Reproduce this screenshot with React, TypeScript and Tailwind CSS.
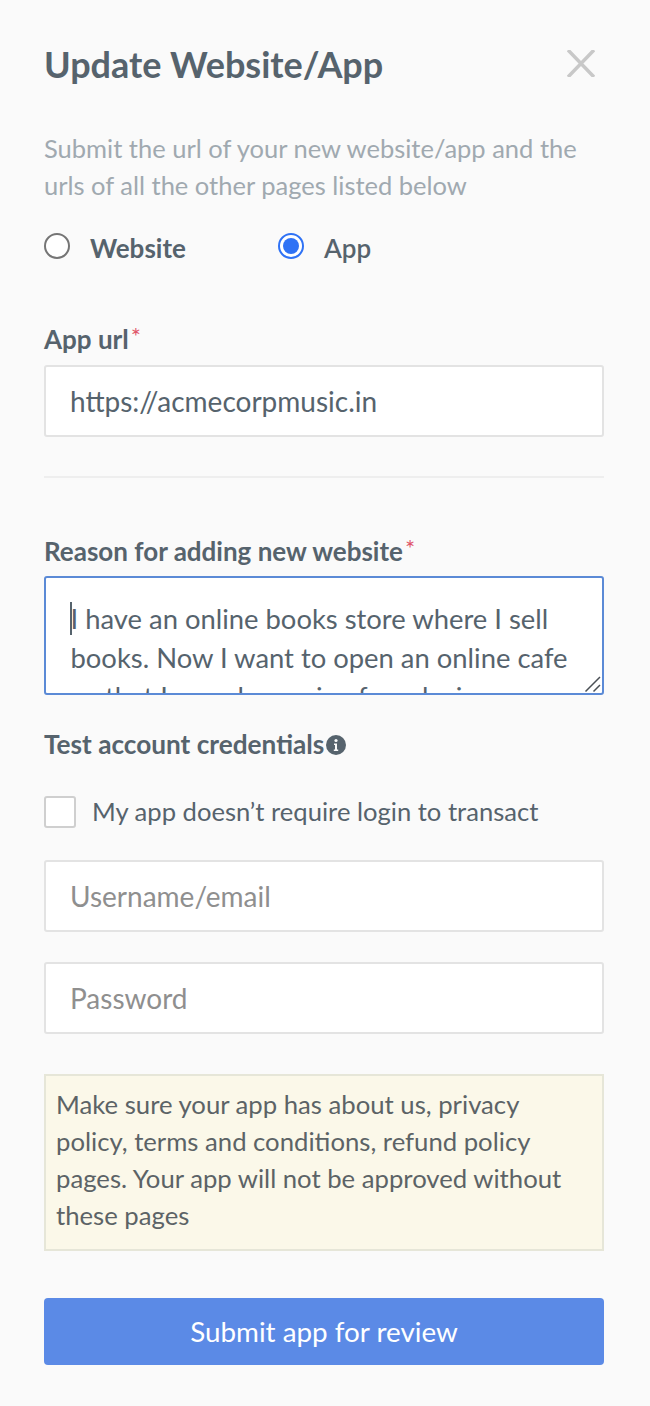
const REASON =
  "I have an online books store where I sell books. Now I want to open an online cafe so that I can also revive from losing my business";

export default function App() {
  return (
    <div className="min-h-[1406px] bg-[#fafafa] pr-[46px] pl-[44px] pt-[40px] font-['Lato',sans-serif] text-[#56636d]">
      <div className="flex items-start justify-between">
        <h1 className="text-[36px] leading-[48px] font-bold">Update Website/App</h1>
        <button className="mt-[10px] mr-[9px] text-[#c8c8c8]">
          <svg width="28" height="27" viewBox="0 0 28 27" fill="none" stroke="currentColor" strokeWidth="3.5">
            <path d="M1 0 27 27M27 0 1 27" />
          </svg>
        </button>
      </div>

      <p className="mt-[42px] text-[25.5px] leading-[37px] text-[#a0a9b0]">
        Submit the url of your new website/app and the urls of all the other pages listed below
      </p>

      <div className="mt-[26px] flex items-center">
        <div className="flex w-[234px] items-center gap-[20px]">
          <span className="mt-[-5px] h-[26px] w-[26px] rounded-full border-2 border-[#757575] bg-white" />
          <span className="text-[26px] leading-[37px] font-bold">Website</span>
        </div>
        <div className="flex items-center gap-[20px]">
          <span className="mt-[-5px] flex h-[26px] w-[26px] items-center justify-center rounded-full border-2 border-[#2f72f5] bg-white">
            <span className="h-[16px] w-[16px] rounded-full bg-[#2f72f5]" />
          </span>
          <span className="text-[26px] leading-[37px] font-semibold">App</span>
        </div>
      </div>

      <label className="mt-[54px] block text-[26px] leading-[37px] font-bold">
        App url<span className="relative top-[-4px] ml-[2px] text-[24px] font-normal text-[#e0566a]">*</span>
      </label>
      <input
        readOnly
        value="https://acmecorpmusic.in"
        className="mt-[7px] block h-[72px] w-full rounded-[3px] border-2 border-[#e3e3e3] bg-white px-[24px] text-[28px] text-[#56636d] outline-none"
      />

      <hr className="mt-[39px] border-0 border-t-2 border-[#eeeeee]" />

      <label className="mt-[55px] block text-[26px] leading-[37px] font-bold">
        Reason for adding new website
        <span className="relative top-[-4px] ml-[2px] text-[24px] font-normal text-[#e0566a]">*</span>
      </label>
      <div className="relative mt-[6px]">
        <textarea
          readOnly
          value={REASON}
          className="block h-[119px] w-full resize-none overflow-hidden rounded-[3px] border-2 border-[#5b8ad6] bg-white px-[24.5px] pt-[21px] text-[27.4px] leading-[39px] text-[#56636d] outline-none"
        />
        <span className="absolute top-[26px] left-[26px] h-[33px] w-[2px] bg-[#56636d]" />
        {/* resize grip */}
        <svg className="absolute right-[2px] bottom-[2px]" width="18" height="18" viewBox="0 0 18 18" stroke="#4a4f55" strokeWidth="1.5">
          <path d="M1.500 16.500 16 2M9.500 16.500 16 10" />
        </svg>
      </div>

      <div className="mt-[31px] flex items-center gap-[2px]">
        <span className="text-[26.2px] leading-[37px] font-bold">Test account credentials</span>
        <svg width="20" height="20" viewBox="0 0 20 20">
          <circle cx="10" cy="10" r="10" fill="#56636d" />
          <circle cx="10" cy="5.500" r="1.600" fill="#fafafa" />
          <path d="M8 8.500h3v6h1.200v1.500H7.800v-1.500H9v-4.500H8z" fill="#fafafa" />
        </svg>
      </div>

      <label className="mt-[30px] flex items-center gap-[16px]">
        <span className="h-[32px] w-[32px] rounded-[3px] border-2 border-[#cfcfcf] bg-white" />
        <span className="text-[25.6px] leading-[37px]">My app doesn’t require login to transact</span>
      </label>

      <input
        readOnly
        placeholder="Username/email"
        className="mt-[30px] block h-[72px] w-full rounded-[3px] border-2 border-[#e3e3e3] bg-white px-[24px] text-[28px] outline-none placeholder:text-[#8f8f8f]"
      />
      <input
        readOnly
        placeholder="Password"
        className="mt-[30px] block h-[72px] w-full rounded-[3px] border-2 border-[#e3e3e3] bg-white px-[24px] text-[28px] outline-none placeholder:text-[#8f8f8f]"
      />

      <div className="mt-[40px] border-2 border-[#e6e6d8] bg-[#fbf8e9] px-[10px] pt-[10px] pb-[15px] text-[25.7px] leading-[37px] text-[#5c6366]">
        Make sure your app has about us, privacy policy, terms and conditions, refund policy pages. Your app will not
        be approved without these pages
      </div>

      <button className="mt-[47px] block h-[67px] w-full rounded-[4px] bg-[#5b8ae6] text-[27.8px] text-white">
        Submit app for review
      </button>
    </div>
  );
}
